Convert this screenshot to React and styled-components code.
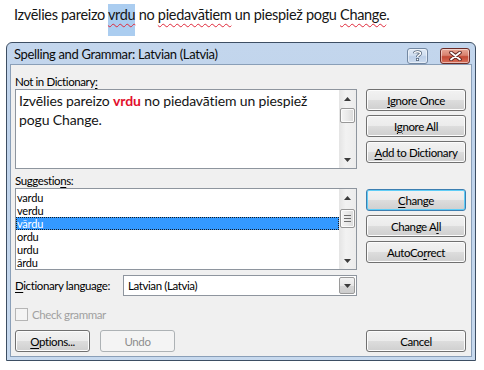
import React from 'react';
import styled, { createGlobalStyle } from 'styled-components';

const GlobalStyle = createGlobalStyle`
  html, body {
    margin: 0;
    padding: 0;
    background: #ffffff;
  }
  body {
    width: 484px;
    height: 370px;
    overflow: hidden;
  }
`

const uiFont = `Lato, "Noto Sans", sans-serif`;
const docFont = `Lato, "Noto Sans", sans-serif`;

const Page = styled.div`
  display: flex;
  flex-direction: column;
`

const DocLine = styled.p`
  margin: 0;
  padding: 6px 0 0 14px;
  font-family: ${docFont};
  font-size: 14.5px;
  letter-spacing: -0.32px;
  line-height: 18px;
  color: #151515;
  white-space: nowrap;
`

const Misspelled = styled.span`
  text-decoration: underline wavy #e0283a;
  text-decoration-thickness: 1px;
  text-underline-offset: 3px;
  text-decoration-skip-ink: none;
`

const Selected = styled(Misspelled)`
  background: #abcdf0;
  padding: 2px 0 13px;
`

const Window = styled.div`
  margin: 18px 0 0 6px;
  width: 470px;
  height: 319px;
  box-sizing: border-box;
  border: 1px solid #3d4e63;
  border-radius: 6px 6px 0 0;
  background: linear-gradient(#c3d6ed, #bfd3eb 30%, #c7d9ee);
  padding: 0 3px 3px;
  display: flex;
  flex-direction: column;
`

const TitleBar = styled.div`
  height: 21px;
  flex: none;
  display: flex;
  align-items: center;
  padding-left: 4px;
  font-family: ${uiFont};
  font-size: 13px;
  letter-spacing: -0.35px;
  color: #0b0b0b;
`

const TitleText = styled.div`
  flex: 1;
  white-space: nowrap;
`

const CaptionButtons = styled.div`
  display: flex;
  align-items: center;
  gap: 12px;
  padding: 4px 2px 0 0;
`

const CaptionButton = styled.div`
  width: ${p => p.$w}px;
  height: 16px;
  box-sizing: border-box;
  border: 1px solid ${p => (p.$close ? '#6b2b27' : '#7388a2')};
  border-radius: 3px;
  display: flex;
  align-items: center;
  justify-content: center;
  background: ${p =>
    p.$close
      ? 'linear-gradient(#e8a897, #d8826f 45%, #c34a35 55%, #d9705a)'
      : 'linear-gradient(#dfe9f5, #d0def0 45%, #bccfe8 55%, #cddcef)'};
  box-shadow: inset 0 0 0 1px rgba(255, 255, 255, 0.5);
`

const Content = styled.div`
  flex: 1;
  background: #f0f0f0;
  border: 1px solid #8a9fb8;
  padding: 9px 5px 0 4px;
  display: grid;
  grid-template-columns: 342px 100px;
  column-gap: 9px;
  align-content: start;
  font-family: ${uiFont};
  font-size: 11.5px;
  letter-spacing: -0.4px;
  color: #000;
`

const Label = styled.div`
  grid-column: 1;
  height: 15px;
  line-height: 15px;
  margin-top: ${p => p.$mt || 0}px;
  white-space: nowrap;
`

const Key = styled.span`
  text-decoration: underline;
  text-underline-offset: 2px;
`

const Box = styled.div`
  grid-column: 1;
  height: ${p => p.$h}px;
  box-sizing: border-box;
  border: 1px solid #8e959e;
  background: #ffffff;
  display: flex;
`

const BoxText = styled.div`
  flex: 1;
  padding: 1px 3px;
  font-family: ${docFont};
  font-size: 14px;
  letter-spacing: -0.13px;
  line-height: 19px;
  color: #141414;
  white-space: nowrap;
`

const Bad = styled.span`
  color: #e2102c;
  font-weight: 700;
`

const List = styled.div`
  flex: 1;
  padding-top: 2px;
  overflow: hidden;
`

const Item = styled.div`
  height: 13px;
  line-height: 13px;
  font-size: 11px;
  letter-spacing: -0.2px;
  padding-left: 1px;
  box-sizing: border-box;
  color: ${p => (p.$sel ? '#ffffff' : '#000000')};
  background: ${p => (p.$sel ? '#3399ff' : 'transparent')};
  outline: ${p => (p.$sel ? '1px dotted #1a1a1a' : 'none')};
  outline-offset: -1px;
`

const ScrollBar = styled.div`
  width: 17px;
  flex: none;
  display: flex;
  flex-direction: column;
  background: linear-gradient(to right, #e4e4e4, #f2f2f2 40%, #ececec);
`

const Arrow = styled.div`
  height: 17px;
  flex: none;
  display: flex;
  align-items: center;
  justify-content: center;
`

const Track = styled.div`
  flex: 1;
  padding: ${p => p.$top}px 1px 0;
`

const Thumb = styled.div`
  height: ${p => p.$h}px;
  box-sizing: border-box;
  border: 1px solid #979797;
  border-radius: 2px;
  background: linear-gradient(to right, #f4f4f4, #e9e9e9 50%, #d9d9d9);
  box-shadow: inset 0 0 0 1px #fbfbfb;
  display: flex;
  align-items: center;
  justify-content: center;
`

const ButtonStack = styled.div`
  grid-column: 2;
  display: flex;
  flex-direction: column;
  gap: 4px;
  padding-top: ${p => p.$top || 0}px;
`

const Button = styled.div`
  width: ${p => p.$w || 100}px;
  height: 22px;
  box-sizing: border-box;
  border: 1px solid ${p => (p.$focus ? '#3c7fb1' : p.$disabled ? '#adb2b5' : '#707070')};
  border-radius: 3px;
  display: flex;
  align-items: center;
  justify-content: center;
  color: ${p => (p.$disabled ? '#8d8d8d' : '#000')};
  background: ${p =>
    p.$disabled
      ? '#f4f4f4'
      : 'linear-gradient(#f2f2f2, #ebebeb 50%, #dddddd 50%, #cfcfcf)'};
  box-shadow: inset 0 0 0 1px ${p => (p.$focus ? '#60cdf6' : p.$disabled ? '#f4f4f4' : '#fcfcfc')};
  white-space: nowrap;
`

const LangRow = styled.div`
  grid-column: 1;
  margin-top: 5px;
  display: flex;
  align-items: center;
  justify-content: space-between;
  white-space: nowrap;
`

const Combo = styled.div`
  width: 234px;
  height: 21px;
  box-sizing: border-box;
  border: 1px solid #8e959e;
  background: #fff;
  display: flex;
  align-items: center;
  padding: 1px 1px 1px 4px;
`

const ComboValue = styled.div`
  flex: 1;
`

const DropButton = styled.div`
  width: 16px;
  height: 17px;
  box-sizing: border-box;
  border: 1px solid #9a9a9a;
  border-radius: 2px;
  background: linear-gradient(#f3f3f3, #e6e6e6 50%, #d6d6d6 50%, #cdcdcd);
  display: flex;
  align-items: center;
  justify-content: center;
`

const CheckRow = styled.div`
  grid-column: 1;
  margin-top: 11px;
  height: 15px;
  display: flex;
  align-items: center;
  gap: 4px;
  color: #a0a0a0;
`

const CheckBox = styled.div`
  width: 13px;
  height: 13px;
  box-sizing: border-box;
  border: 1px solid #b5b5b5;
  background: #f4f4f4;
`

const Footer = styled.div`
  grid-column: 1 / span 2;
  margin-top: 8px;
  display: flex;
  gap: 10px;
`

const Spacer = styled.div`
  flex: 1;
`

const UpArrow = () => (
  <svg width="7" height="4" viewBox="0 0 7 4"><path d="M0 4 L3.5 0 L7 4 Z" fill="#3b3b3b" /></svg>
);

const DownArrow = () => (
  <svg width="7" height="4" viewBox="0 0 7 4"><path d="M0 0 L3.5 4 L7 0 Z" fill="#3b3b3b" /></svg>
);

const Grip = () => (
  <svg width="7" height="7" viewBox="0 0 7 7">
    <path d="M0 0.5 H7 M0 3.5 H7 M0 6.5 H7" stroke="#6d6d6d" strokeWidth="1" />
  </svg>
);

const suggestions = ['vardu', 'verdu', 'vārdu', 'ordu', 'urdu', 'ārdu'];

function App() {
  return (
    <Page>
      <GlobalStyle />
      <DocLine>
        Izvēlies pareizo <Selected>vrdu</Selected> no <Misspelled>piedavātiem</Misspelled> un piespiež pogu <Misspelled>Change</Misspelled>.
      </DocLine>

      <Window>
        <TitleBar>
          <TitleText>Spelling and Grammar: Latvian (Latvia)</TitleText>
          <CaptionButtons>
            <CaptionButton $w={21}>
              <svg width="9" height="11" viewBox="0 0 9 11">
                <path d="M1.5 3.2 C1.5 1.2 7.5 1.2 7.5 3.4 C7.5 5.2 4.5 5 4.5 7" fill="none" stroke="#56677c" strokeWidth="3" />
                <path d="M1.5 3.2 C1.5 1.2 7.5 1.2 7.5 3.4 C7.5 5.2 4.5 5 4.5 7" fill="none" stroke="#ffffff" strokeWidth="1.4" />
                <rect x="3" y="8" width="3" height="3" fill="#56677c" />
                <rect x="3.8" y="8.8" width="1.4" height="1.4" fill="#ffffff" />
              </svg>
            </CaptionButton>
            <CaptionButton $w={30} $close>
              <svg width="13" height="10" viewBox="0 0 13 10">
                <path d="M2 1.5 L11 8.5 M11 1.5 L2 8.5" stroke="#5a2320" strokeWidth="3.6" strokeLinecap="round" />
                <path d="M2 1.5 L11 8.5 M11 1.5 L2 8.5" stroke="#ffffff" strokeWidth="1.8" strokeLinecap="round" />
              </svg>
            </CaptionButton>
          </CaptionButtons>
        </TitleBar>

        <Content>
          <Label>Not in Dictionary<Key>:</Key></Label>
          <Box $h={80}>
            <BoxText>
              Izvēlies pareizo <Bad>vrdu</Bad> no piedavātiem un piespiež<br />
              pogu Change.
            </BoxText>
            <ScrollBar>
              <Arrow><UpArrow /></Arrow>
              <Track $top={1}>
                <Thumb $h={15} />
              </Track>
              <Arrow><DownArrow /></Arrow>
            </ScrollBar>
          </Box>
          <ButtonStack>
            <Button><Key>I</Key>gnore Once</Button>
            <Button>I<Key>g</Key>nore All</Button>
            <Button><Key>A</Key>dd to Dictionary</Button>
          </ButtonStack>

          <Label $mt={4}>Suggestio<Key>n</Key>s:</Label>
          <Box $h={82}>
            <List>
              {suggestions.map(s => (
                <Item key={s} $sel={s === 'vārdu'}>{s}</Item>
              ))}
            </List>
            <ScrollBar>
              <Arrow><UpArrow /></Arrow>
              <Track $top={3}>
                <Thumb $h={19}><Grip /></Thumb>
              </Track>
              <Arrow><DownArrow /></Arrow>
            </ScrollBar>
          </Box>
          <ButtonStack $top={1}>
            <Button $focus><Key>C</Key>hange</Button>
            <Button>Change A<Key>l</Key>l</Button>
            <Button>AutoCo<Key>r</Key>rect</Button>
          </ButtonStack>

          <LangRow>
            <div><Key>D</Key>ictionary language:</div>
            <Combo>
              <ComboValue>Latvian (Latvia)</ComboValue>
              <DropButton><DownArrow /></DropButton>
            </Combo>
          </LangRow>

          <CheckRow>
            <CheckBox />
            Check grammar
          </CheckRow>

          <Footer>
            <Button $w={75}><Key>O</Key>ptions...</Button>
            <Button $w={75} $disabled>Undo</Button>
            <Spacer />
            <Button>Cancel</Button>
          </Footer>
        </Content>
      </Window>
    </Page>
  );
}

export default App;
